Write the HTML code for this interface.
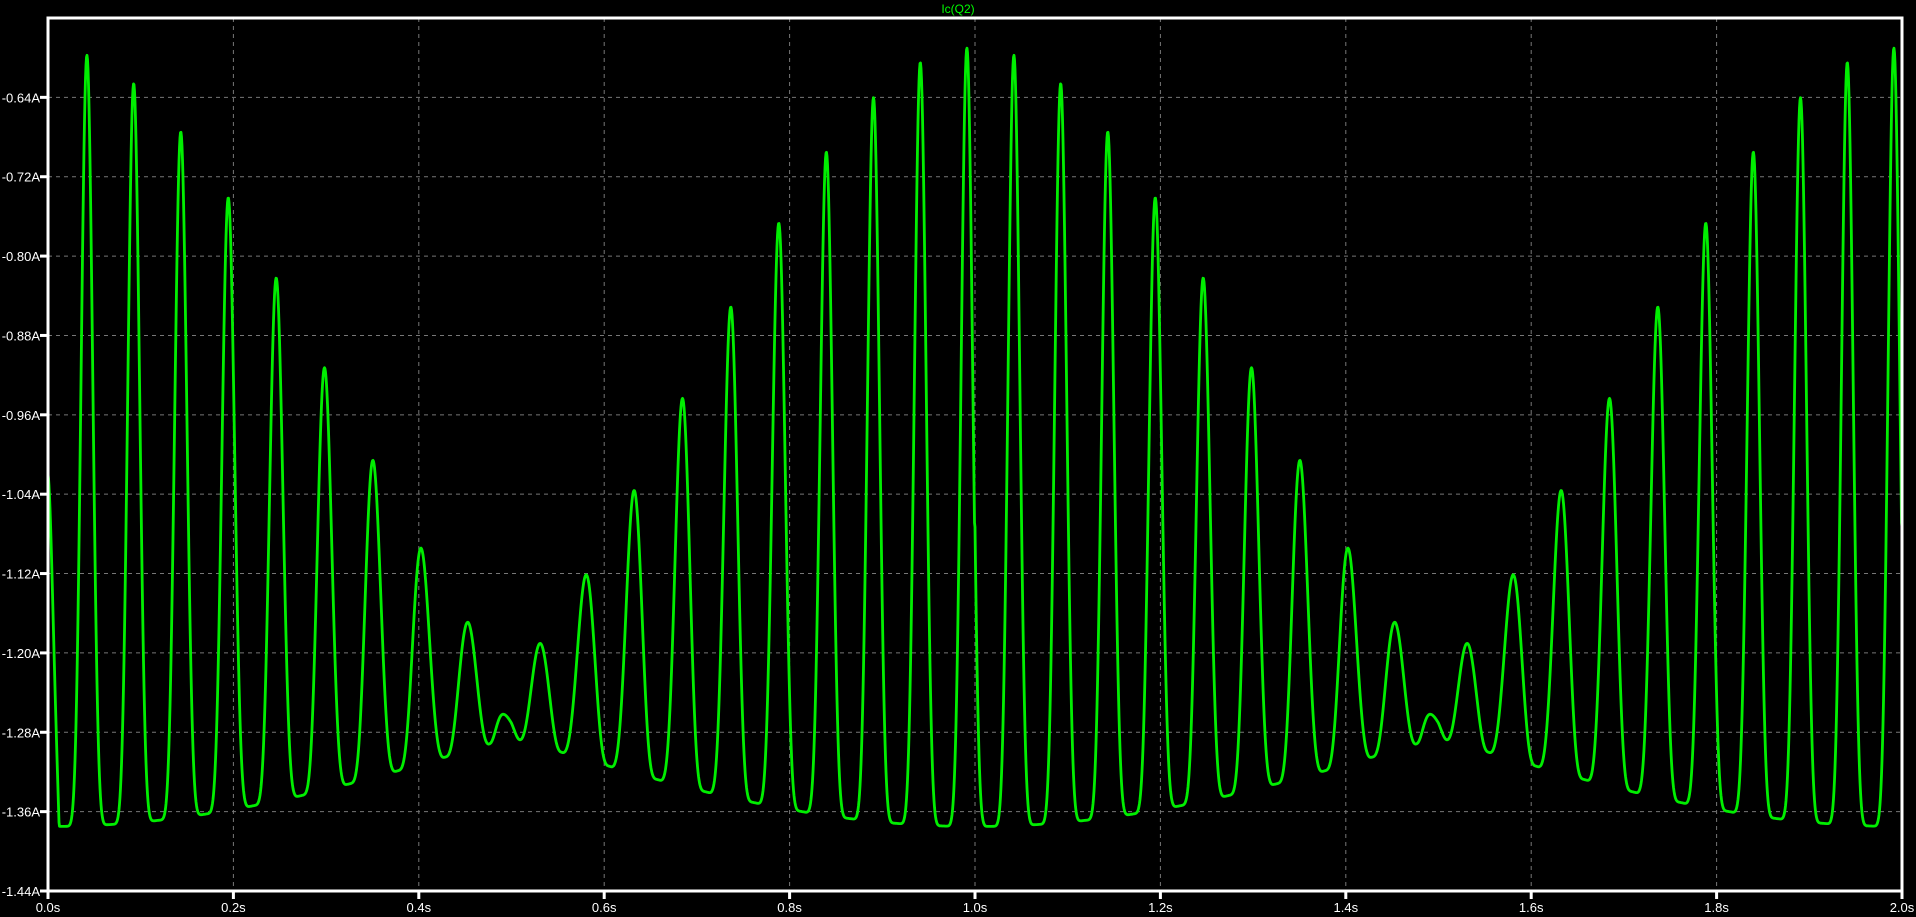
<!DOCTYPE html>
<html><head><meta charset="utf-8"><style>
html,body{margin:0;padding:0;background:#000;width:1916px;height:917px;overflow:hidden}
svg{display:block}
text{font-family:"Liberation Sans",sans-serif;font-size:13px;fill:#fff}
</style></head><body>
<svg id="s" width="1916" height="917" xmlns="http://www.w3.org/2000/svg">
<text x="958" y="13" text-anchor="middle" style="fill:#00ff00;font-size:12px">Ic(Q2)</text>
<g id="grid"></g>
<path id="w" fill="none" stroke="#00ee00" stroke-width="2.8" stroke-linejoin="round"/>
<rect x="48" y="18" width="1854" height="873" fill="none" stroke="#fff" stroke-width="3"/>
</svg>
<script>
var L=48,T=18,R=1902,B=891,W=R-L,H=B-T;
var g=document.getElementById('grid'),h='';
function ty(v){return T+(-0.56-v)/0.88*H;}
var ylab=['-0.64A','-0.72A','-0.80A','-0.88A','-0.96A','-1.04A','-1.12A','-1.20A','-1.28A','-1.36A','-1.44A'];
for(var i=0;i<11;i++){var y=T+(i+1)*H/11;
 if(i<10)h+='<line x1="'+L+'" y1="'+y+'" x2="'+R+'" y2="'+y+'" stroke="#777" stroke-width="1" stroke-dasharray="4,4"/>';
 h+='<line x1="40" y1="'+y+'" x2="48" y2="'+y+'" stroke="#fff" stroke-width="3"/>';
 h+='<text x="40" y="'+(y+5)+'" text-anchor="end">'+ylab[i]+'</text>';}
for(var j=0;j<=10;j++){var x=L+j*W/10;
 if(j>0&&j<10)h+='<line x1="'+x+'" y1="'+T+'" x2="'+x+'" y2="'+B+'" stroke="#777" stroke-width="1" stroke-dasharray="4,4"/>';
 h+='<line x1="'+x+'" y1="'+B+'" x2="'+x+'" y2="'+(B+8)+'" stroke="#fff" stroke-width="3"/>';
 h+='<text x="'+x+'" y="'+(B+21)+'" text-anchor="middle">'+(j*0.2).toFixed(1)+'s</text>';}
g.innerHTML=h;
var d='';
for(var px=0;px<=W;px+=0.5){
 var t=px/W*2;
 var dd=Math.abs(t-Math.round(t));
 var c=Math.cos(Math.PI*dd);
 var peak=-1.21+0.62*Math.pow(c,1.4);
 var tr=-1.375+0.09*(1-c);
 var m=t-Math.floor(t)-0.495;
 var tt=t+0.013*Math.tanh(m/0.02)*Math.exp(-Math.pow(m/0.25,2));
 var th=2*Math.PI*(tt-0.0415)/0.05;
 var p=1.0+2.4*c;
 var f=Math.pow((1+Math.cos(th))/2,p)*(1-0.7*Math.exp(-Math.pow(m/0.02,2)));
 var v=tr+(peak-tr)*f;
 if(t<0.03){v=v+(-1.02-v)*Math.max(0,1-t/0.012);}
 d+=(px?'L':'M')+(L+px).toFixed(1)+' '+ty(v).toFixed(1);
}
document.getElementById('w').setAttribute('d',d);
</script>
</body></html>
